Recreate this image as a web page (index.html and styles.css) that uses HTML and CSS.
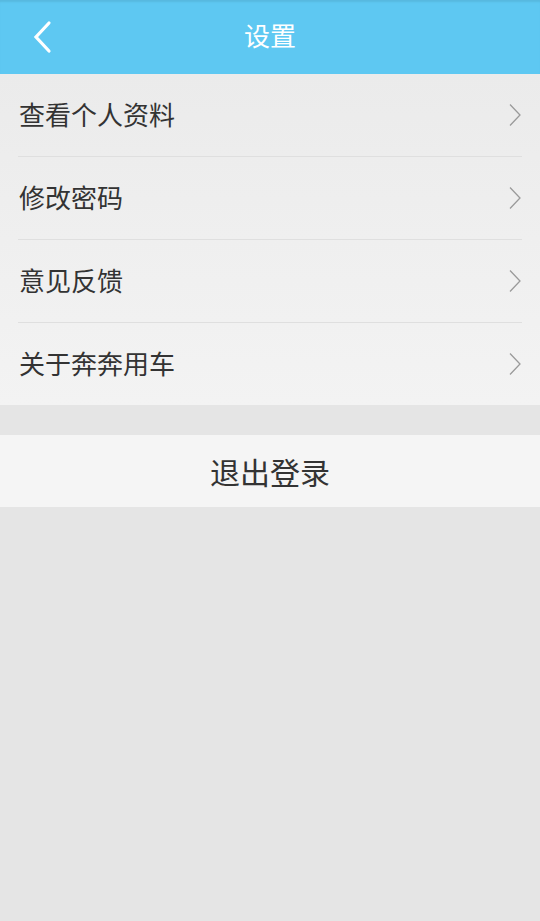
FILE: index.html
```html
<!DOCTYPE html>
<html lang="zh">
<head>
<meta charset="utf-8">
<link rel="stylesheet" href="styles.css">
</head>
<body>
<header class="bar">
  <svg class="back" width="24" height="36" viewBox="0 0 24 36"><polyline points="16,4 3,18 16,32" fill="none" stroke="#fff" stroke-width="3.2" stroke-linecap="round" stroke-linejoin="miter"/></svg>
  <h1 class="title">设置</h1>
</header>
<ul class="list">
  <li class="item"><span>查看个人资料</span><svg class="chev" width="14" height="24" viewBox="0 0 14 24"><polyline points="2,1.5 12,12 2,22.5" fill="none" stroke="#9a9a9a" stroke-width="1.3"/></svg></li>
  <li class="item"><span>修改密码</span><svg class="chev" width="14" height="24" viewBox="0 0 14 24"><polyline points="2,1.5 12,12 2,22.5" fill="none" stroke="#9a9a9a" stroke-width="1.3"/></svg></li>
  <li class="item"><span>意见反馈</span><svg class="chev" width="14" height="24" viewBox="0 0 14 24"><polyline points="2,1.5 12,12 2,22.5" fill="none" stroke="#9a9a9a" stroke-width="1.3"/></svg></li>
  <li class="item"><span>关于奔奔用车</span><svg class="chev" width="14" height="24" viewBox="0 0 14 24"><polyline points="2,1.5 12,12 2,22.5" fill="none" stroke="#9a9a9a" stroke-width="1.3"/></svg></li>
</ul>
<div class="logout">退出登录</div>
</body>
</html>
```
FILE: styles.css
```css
html, body {
  margin: 0;
  padding: 0;
}
body {
  background: #e5e5e5;
  font-family: "Noto Sans CJK SC", "Noto Sans", sans-serif;
  width: 540px;
  min-height: 921px;
}
.bar {
  height: 74px;
  background: #5ec8f2;
  box-shadow: inset 0 3px 2px -1px rgba(0,0,0,0.08);
  display: flex;
  align-items: center;
  justify-content: center;
  position: relative;
}
.back {
  position: absolute;
  left: 33px;
  top: 19px;
}
.title {
  margin: 0 0 5px 0;
  color: #fff;
  font-size: 26px;
  font-weight: normal;
  line-height: 1;
}
.list {
  list-style: none;
  margin: 0;
  padding: 0 18px;
  background: linear-gradient(#ebebeb, #f3f3f3);
}
.item {
  height: 82px;
  display: flex;
  align-items: center;
  justify-content: space-between;
  border-top: 1px solid #dfdfdf;
  font-size: 26px;
  color: #333;
  padding-left: 1px;
}
.item:first-child {
  border-top: none;
}
.item span {
  line-height: 1;
  margin-bottom: 2px;
}
.logout {
  margin-top: 30px;
  height: 72px;
  background: #f5f5f5;
  display: flex;
  align-items: center;
  justify-content: center;
  font-size: 30px;
  color: #333;
}
```
